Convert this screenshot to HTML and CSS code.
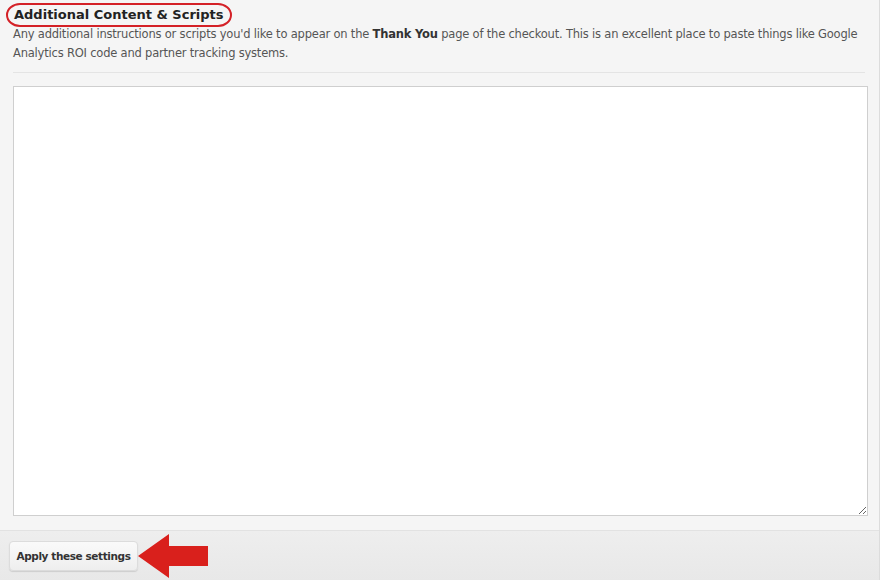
FILE: index.html
```html
<!DOCTYPE html>
<html>
<head>
<meta charset="utf-8">
<link rel="stylesheet" href="styles.css">
</head>
<body>
<div class="panel">
  <div class="content">
    <h2 class="title"><span class="title-text">Additional Content &amp; Scripts</span></h2>
    <p class="desc">Any additional instructions or scripts you'd like to appear on the <b>Thank You</b> page of the checkout. This is an excellent place to paste things like Google Analytics ROI code and partner tracking systems.</p>
    <hr class="sep">
    <textarea class="editor"></textarea>
  </div>
  <div class="footer">
    <button class="apply">Apply these settings</button>
    <svg class="arrow" width="70" height="44" viewBox="0 0 70 44"><polygon points="0,22 31,0 31,12 70,12 70,32 31,32 31,44" fill="#d9201c"/></svg>
  </div>
</div>
</body>
</html>
```
FILE: styles.css
```css
html, body { margin: 0; padding: 0; background: #fff; }
body { font-family: "DejaVu Sans", Verdana, sans-serif; color: #333; }
.panel {
  width: 880px;
  height: 580px;
  background: #f5f5f5;
  border-right: 1px solid #dcdcdc;
  display: flex;
  flex-direction: column;
  box-sizing: border-box;
}
.content { padding: 3px 14px 0 13px; flex: 1; display: flex; flex-direction: column; }
.title { margin: 0; font-size: 13px; font-weight: bold; color: #222; line-height: 22px; height: 22px; }
.title-text {
  display: inline-block;
  position: relative;
  padding: 0 6px;
  margin-left: -7px;
  border: 2px solid #d42127;
  border-radius: 14px / 12px;
  line-height: 20px;
}
.desc { margin: 0; font-size: 11.5px; letter-spacing: -0.2px; line-height: 19px; color: #555; }
.desc b { color: #333; }
.sep { border: 0; border-top: 1px solid #e4e4e4; margin: 9px 0 13px; height: 0; }
.editor {
  width: 855px;
  height: 430px;
  box-sizing: border-box;
  border: 1px solid #cfcfcf;
  background: #fff;
  margin: 0;
  padding: 4px;
  display: block;
}
.footer {
  height: 50px;
  border-top: 1px solid #e2e2e2;
  background: linear-gradient(#eeeeee, #e8e8e8);
  display: flex;
  align-items: center;
  padding-left: 9px;
  box-sizing: border-box;
}
.apply {
  font-family: "DejaVu Sans", Verdana, sans-serif;
  font-size: 10.5px;
  letter-spacing: -0.4px;
  font-weight: bold;
  color: #333;
  width: 129px;
  height: 30px;
  padding: 0;
  border: 1px solid #dcdcdc;
  border-radius: 4px;
  background: linear-gradient(#fafafa, #eeeeee);
  box-shadow: 0 1px 1px rgba(0,0,0,0.12);
}
.arrow { display: block; margin-left: 0; }
```
